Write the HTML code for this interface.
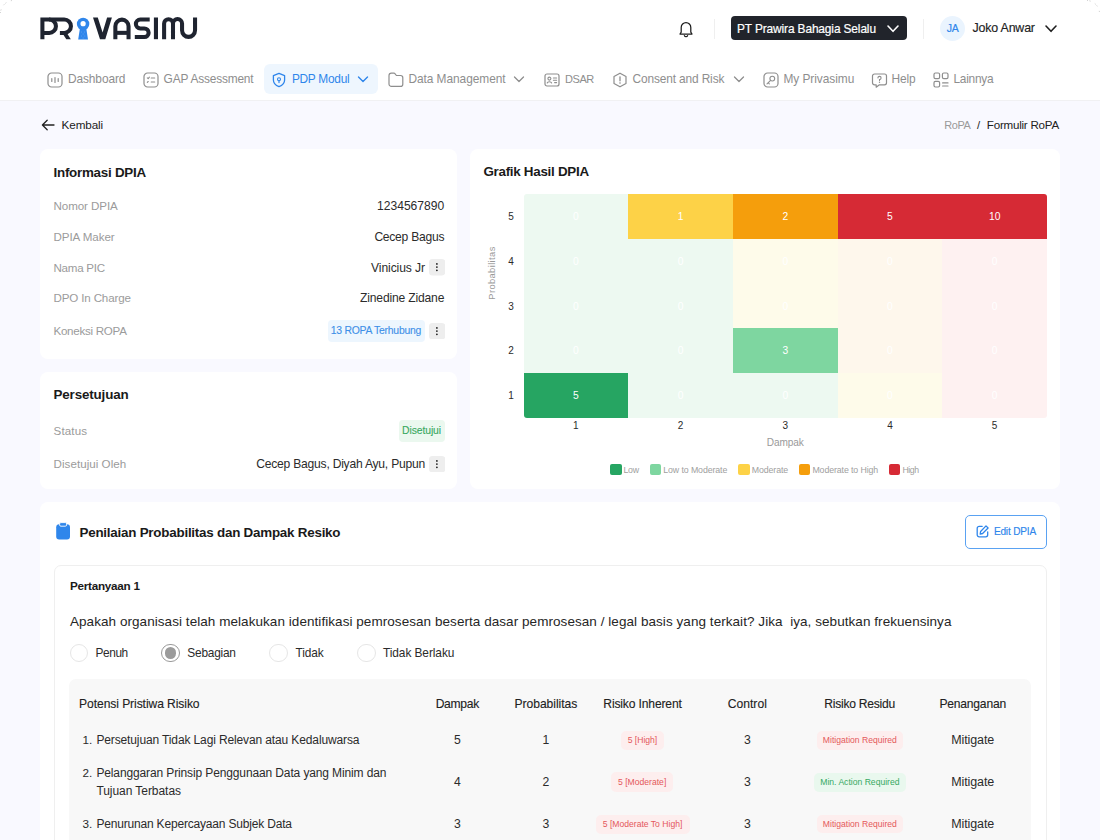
<!DOCTYPE html>
<html><head><meta charset="utf-8"><style>
html,body{margin:0;padding:0;}
body{width:1100px;height:840px;overflow:hidden;position:relative;background:#F9F9FF;font-family:"Liberation Sans", sans-serif;}
.t{position:absolute;white-space:nowrap;}
.r{position:absolute;}
</style></head><body>
<div class="r" style="left:0px;top:0px;width:1100px;height:100px;background:#FFFFFF;border-radius:0;"></div><div class="r" style="left:0px;top:100px;width:1100px;height:1px;background:#F1F1F3;border-radius:0;"></div><svg class="r" style="left:0;top:0" width="1100" height="30"><path d="M0.4 13 A13.5 13.5 0 0 1 13 0.4" stroke="#BDBDBD" stroke-width="0.9" stroke-dasharray="1 1.6 1 5" fill="none"/><path d="M1087 0.4 A13.5 13.5 0 0 1 1099.6 13" stroke="#BDBDBD" stroke-width="0.9" stroke-dasharray="1 1.6 1 5" fill="none"/></svg><svg class="r" style="left:0;top:0" width="210" height="50">
<g stroke="#1F2430" stroke-width="4.05" fill="none" stroke-linecap="butt" stroke-linejoin="miter">
<path d="M42.4 39.2 V19.5 H49.25 A6.7 6.7 0 0 1 49.25 32.9 H42.4"/>
<path d="M49 19.5 H64.25 A6.7 6.7 0 0 1 64.25 32.9 H59.9"/>
<path d="M115.35 39.2 V26.25 A6.6 6.6 0 0 1 128.55 26.25 V39.2"/>
<path d="M115.35 32.85 H128.55"/>
<path d="M149.7 19.55 H140.3 A4.45 4.45 0 0 0 140.3 28.45 H144.35 A4.3 4.3 0 0 1 144.35 37.05 H134.8"/>
<path d="M164.1 39.2 V23.6 A4.45 4.45 0 0 1 173 23.6 V39.2 M173 23.6 A4.52 4.52 0 0 1 182.05 23.6 V30.35 A6.5 6.5 0 0 0 195.05 30.35 V17.5"/>
</g>
<g fill="#1F2430">
<path d="M62.6 33.6 H67.2 L70.8 39.2 H66.3 Z"/>
<path d="M93 17.6 H97.8 L102.6 32.4 L107.1 17.6 H111.9 L105.3 39.2 H100 Z"/>
<rect x="153.9" y="17.5" width="4.1" height="21.7"/>
</g>
<circle cx="83.1" cy="24" r="6.2" fill="#2F86EB"/>
<circle cx="83.1" cy="23.65" r="2.6" fill="#fff"/>
<path d="M79.9 28.6 H86.3 L88 39.4 H78.2 Z" fill="#2F86EB"/>
<g fill="#7FB4F2"><circle cx="81.5" cy="32" r="0.45"/><circle cx="84.7" cy="32" r="0.45"/><circle cx="83.1" cy="34" r="0.45"/><circle cx="81.3" cy="36" r="0.45"/><circle cx="84.9" cy="36" r="0.45"/><circle cx="83.1" cy="38" r="0.45"/></g>
</svg><svg class="r" style="left:676px;top:19px;" width="20" height="20" viewBox="0 0 20 20" fill="none"><path d="M4 15 L5.2 13.2 V8.4 A4.8 4.8 0 0 1 14.8 8.4 V13.2 L16 15 Z" stroke="#1E1E1E" stroke-width="1.25" stroke-linejoin="round"/><path d="M8.4 16.6 A1.7 1.7 0 0 0 11.6 16.6" stroke="#1E1E1E" stroke-width="1.25" stroke-linecap="round"/></svg><div class="r" style="left:714px;top:18.5px;width:1px;height:20.0px;background:#EFEFEF;border-radius:0;"></div><div class="r" style="left:730.5px;top:16.3px;width:176.79999999999995px;height:23.599999999999998px;background:#21242B;border-radius:4px;"></div><div class="t" style="top:21px;font-size:11.9px;line-height:16px;color:#FFFFFF;letter-spacing:-0.12px;left:737px;-webkit-text-stroke:0.2px #FFFFFF;">PT Prawira Bahagia Selalu</div><svg class="r" style="left:886px;top:22.5px;" width="14" height="10" viewBox="0 0 14 10" fill="none"><path d="M2 3 L7 8.3 L12 3" stroke="#fff" stroke-width="1.6" stroke-linecap="round" stroke-linejoin="round"/></svg><div class="r" style="left:923px;top:18.5px;width:1px;height:20.0px;background:#EFEFEF;border-radius:0;"></div><div class="r" style="left:940px;top:15.8px;width:25.200000000000045px;height:25.2px;background:#EAF4FE;border-radius:50%;"></div><div class="t" style="top:21px;font-size:10.5px;line-height:14px;color:#2F86EB;letter-spacing:-0.3px;left:932.60px;width:40px;text-align:center;-webkit-text-stroke:0.2px #2F86EB;">JA</div><div class="t" style="top:20px;font-size:12.4px;line-height:17px;color:#222222;letter-spacing:-0.174px;left:972.5px;-webkit-text-stroke:0.15px #222222;">Joko Anwar</div><svg class="r" style="left:1044px;top:22.5px;" width="14" height="10" viewBox="0 0 14 10" fill="none"><path d="M2 3 L7 8.3 L12 3" stroke="#1E1E1E" stroke-width="1.6" stroke-linecap="round" stroke-linejoin="round"/></svg><div class="r" style="left:264px;top:64px;width:114px;height:30.299999999999997px;background:#EEF6FE;border-radius:6px;"></div><div class="t" style="top:71px;font-size:11.9px;line-height:16px;color:#8E8E8E;letter-spacing:-0.096px;left:68px;">Dashboard</div><div class="t" style="top:71px;font-size:11.9px;line-height:16px;color:#8E8E8E;letter-spacing:-0.178px;left:163.6px;">GAP Assessment</div><div class="t" style="top:71px;font-size:11.9px;line-height:16px;color:#2F86EB;letter-spacing:-0.267px;left:291.9px;">PDP Modul</div><div class="t" style="top:71px;font-size:11.9px;line-height:16px;color:#8E8E8E;letter-spacing:-0.045px;left:408.4px;">Data Management</div><div class="t" style="top:72px;font-size:11.02px;line-height:15px;color:#8E8E8E;letter-spacing:-0.4px;left:564.9px;">DSAR</div><div class="t" style="top:71px;font-size:11.9px;line-height:16px;color:#8E8E8E;letter-spacing:-0.131px;left:632.5px;">Consent and Risk</div><div class="t" style="top:71px;font-size:11.9px;line-height:16px;color:#8E8E8E;letter-spacing:-0.042px;left:783.4px;">My Privasimu</div><div class="t" style="top:71px;font-size:11.9px;line-height:16px;color:#8E8E8E;letter-spacing:-0.056px;left:891.4px;">Help</div><div class="t" style="top:71px;font-size:11.9px;line-height:16px;color:#8E8E8E;letter-spacing:-0.243px;left:953.4px;">Lainnya</div><svg class="r" style="left:47px;top:72px;" width="16" height="16" viewBox="0 0 16 16" fill="none"><rect x="1" y="1" width="14" height="14" rx="3.6" stroke="#8E8E8E" stroke-width="1.2"/><path d="M4.8 6.6 V9.4 M8 5.6 V10.4 M11.2 6.6 V9.4" stroke="#8E8E8E" stroke-width="1.2" stroke-linecap="round"/></svg><svg class="r" style="left:142.5px;top:72px;" width="16" height="16" viewBox="0 0 16 16" fill="none"><rect x="1" y="1" width="14" height="14" rx="3.6" stroke="#8E8E8E" stroke-width="1.2"/><path d="M4.3 5.8 L5.2 6.6 L6.4 5.2 M8.2 6 H11.7 M4.3 10.4 L5.2 9.5 M8.2 10 H11.7" stroke="#8E8E8E" stroke-width="1.1" stroke-linecap="round" stroke-linejoin="round"/></svg><svg class="r" style="left:270.5px;top:71.5px;" width="16" height="16" viewBox="0 0 16 16" fill="none"><path d="M8 1.3 L13.6 3.6 V8 C13.6 11.3 11 13.6 8 14.7 C5 13.6 2.4 11.3 2.4 8 V3.6 Z" stroke="#2F86EB" stroke-width="1.3" stroke-linejoin="round"/><circle cx="8" cy="7.2" r="1.5" stroke="#2F86EB" stroke-width="1.1"/><path d="M8 8.7 V10.6" stroke="#2F86EB" stroke-width="1.2" stroke-linecap="round"/></svg><svg class="r" style="left:357px;top:74.5px;" width="12" height="9" viewBox="0 0 12 9" fill="none"><path d="M1.5 2 L6 6.5 L10.5 2" stroke="#2F86EB" stroke-width="1.4" stroke-linecap="round" stroke-linejoin="round"/></svg><svg class="r" style="left:386.5px;top:71.5px;" width="17" height="16" viewBox="0 0 17 16" fill="none"><path d="M2 3.6 A2.4 2.4 0 0 1 4.4 1.2 H7 A1.2 1.2 0 0 1 7.9 1.6 L9.4 3.5 H13.6 A2.2 2.2 0 0 1 15.8 5.7 V12.2 A2.2 2.2 0 0 1 13.6 14.4 H4.4 A2.4 2.4 0 0 1 2 12 Z" stroke="#8E8E8E" stroke-width="1.2" stroke-linejoin="round"/></svg><svg class="r" style="left:513px;top:74.5px;" width="12" height="9" viewBox="0 0 12 9" fill="none"><path d="M1.5 2 L6 6.5 L10.5 2" stroke="#8E8E8E" stroke-width="1.3" stroke-linecap="round" stroke-linejoin="round"/></svg><svg class="r" style="left:543.5px;top:72px;" width="16" height="16" viewBox="0 0 16 16" fill="none"><rect x="1" y="2" width="14" height="12" rx="2" stroke="#8E8E8E" stroke-width="1.2"/><circle cx="5.4" cy="6.6" r="1.5" stroke="#8E8E8E" stroke-width="1.1"/><path d="M3.2 11 C3.6 9.4 7.2 9.4 7.6 11" stroke="#8E8E8E" stroke-width="1.1" stroke-linecap="round"/><path d="M9.4 6 H12.6 M9.4 8.3 H12.6 M10.6 10.6 H12.6" stroke="#8E8E8E" stroke-width="1.1" stroke-linecap="round"/></svg><svg class="r" style="left:611.5px;top:71.5px;" width="16" height="16" viewBox="0 0 16 16" fill="none"><path d="M8 1.2 L14 4.6 V11.4 L8 14.8 L2 11.4 V4.6 Z" stroke="#8E8E8E" stroke-width="1.2" stroke-linejoin="round"/><path d="M8 4.8 V8.8" stroke="#8E8E8E" stroke-width="1.3" stroke-linecap="round"/><circle cx="8" cy="11" r="0.8" fill="#8E8E8E"/></svg><svg class="r" style="left:732.5px;top:74.5px;" width="12" height="9" viewBox="0 0 12 9" fill="none"><path d="M1.5 2 L6 6.5 L10.5 2" stroke="#8E8E8E" stroke-width="1.3" stroke-linecap="round" stroke-linejoin="round"/></svg><svg class="r" style="left:762.5px;top:72px;" width="16" height="16" viewBox="0 0 16 16" fill="none"><rect x="1" y="1" width="14" height="14" rx="3.6" stroke="#8E8E8E" stroke-width="1.2"/><circle cx="9.3" cy="6.6" r="2.4" stroke="#8E8E8E" stroke-width="1.1"/><path d="M7.6 8.3 L4 11.9 M5.2 10.7 L6.3 11.8" stroke="#8E8E8E" stroke-width="1.1" stroke-linecap="round"/></svg><svg class="r" style="left:870.5px;top:71.5px;" width="17" height="17" viewBox="0 0 17 17" fill="none"><path d="M3.5 2 H13.5 A2 2 0 0 1 15.5 4 V10.8 A2 2 0 0 1 13.5 12.8 H8.4 L5.2 15.2 V12.8 H3.5 A2 2 0 0 1 1.5 10.8 V4 A2 2 0 0 1 3.5 2 Z" stroke="#8E8E8E" stroke-width="1.2" stroke-linejoin="round"/><path d="M6.9 5.9 A1.6 1.6 0 1 1 8.5 7.6 V8.4" stroke="#8E8E8E" stroke-width="1.1" stroke-linecap="round"/><circle cx="8.5" cy="10.3" r="0.7" fill="#8E8E8E"/></svg><svg class="r" style="left:932.5px;top:71.5px;" width="16" height="16" viewBox="0 0 16 16" fill="none"><rect x="1" y="1" width="5.6" height="5.6" rx="1.4" stroke="#8E8E8E" stroke-width="1.2"/><rect x="9.4" y="1" width="5.6" height="5.6" rx="1.4" stroke="#8E8E8E" stroke-width="1.2"/><rect x="1" y="9.4" width="5.6" height="5.6" rx="1.4" stroke="#8E8E8E" stroke-width="1.2"/><path d="M9.6 10.9 H15 M9.6 14 H15" stroke="#8E8E8E" stroke-width="1.2" stroke-linecap="round"/></svg><svg class="r" style="left:40px;top:118px;" width="16" height="14" viewBox="0 0 16 14" fill="none"><path d="M14 7 H2.6 M7.2 2.2 L2.4 7 L7.2 11.8" stroke="#222" stroke-width="1.3" stroke-linecap="round" stroke-linejoin="round"/></svg><div class="t" style="top:117px;font-size:11.7px;line-height:16px;color:#222222;letter-spacing:-0.106px;left:61.6px;">Kembali</div><div class="t" style="top:118px;font-size:10.95px;line-height:15px;color:#9A9A9A;letter-spacing:-0.4px;left:944.3px;">RoPA</div><div class="t" style="top:118px;font-size:11.2px;line-height:15px;color:#222222;left:977px;">/</div><div class="t" style="top:117px;font-size:11.6px;line-height:16px;color:#222222;letter-spacing:-0.238px;right:41.09999999999991px;">Formulir RoPA</div><div class="r" style="left:40px;top:149px;width:417px;height:209.60000000000002px;background:#FFFFFF;border-radius:8px;"></div><div class="r" style="left:470px;top:149px;width:590px;height:339.6px;background:#FFFFFF;border-radius:8px;"></div><div class="r" style="left:40px;top:372px;width:417px;height:116.60000000000002px;background:#FFFFFF;border-radius:8px;"></div><div class="r" style="left:40px;top:502px;width:1020px;height:398px;background:#FFFFFF;border-radius:8px;"></div><div class="t" style="top:164px;font-size:13.4px;line-height:18px;color:#1A1A1A;font-weight:700;letter-spacing:-0.26px;left:53.5px;">Informasi DPIA</div><div class="t" style="top:198px;font-size:11.6px;line-height:16px;color:#9B9B9B;letter-spacing:-0.086px;left:53.5px;">Nomor DPIA</div><div class="t" style="top:198px;font-size:12.1px;line-height:16px;color:#2B2B2B;letter-spacing:-0.007px;right:655.8px;">1234567890</div><div class="t" style="top:229px;font-size:11.6px;line-height:16px;color:#9B9B9B;letter-spacing:-0.073px;left:53.5px;">DPIA Maker</div><div class="t" style="top:229px;font-size:12.1px;line-height:16px;color:#2B2B2B;letter-spacing:-0.253px;right:655.8px;">Cecep Bagus</div><div class="t" style="top:260px;font-size:11.6px;line-height:16px;color:#9B9B9B;letter-spacing:-0.269px;left:53.5px;">Nama PIC</div><div class="t" style="top:260px;font-size:12.1px;line-height:16px;color:#2B2B2B;letter-spacing:-0.099px;right:675.1px;">Vinicius Jr</div><div class="t" style="top:290px;font-size:11.6px;line-height:16px;color:#9B9B9B;letter-spacing:-0.155px;left:53.5px;">DPO In Charge</div><div class="t" style="top:290px;font-size:12.1px;line-height:16px;color:#2B2B2B;letter-spacing:-0.174px;right:655.8px;">Zinedine Zidane</div><svg class="r" style="left:428.6px;top:259.3px" width="16.4" height="16.4" viewBox="0 0 16.4 16.4"><rect width="16.4" height="16.4" rx="3.5" fill="#EEEEEE"/><circle cx="7.9" cy="4.9" r="0.85" fill="#111"/><circle cx="7.9" cy="8.1" r="0.85" fill="#111"/><circle cx="7.9" cy="11.3" r="0.85" fill="#111"/></svg><div class="t" style="top:323px;font-size:11.6px;line-height:16px;color:#9B9B9B;letter-spacing:-0.279px;left:53.5px;">Koneksi ROPA</div><div class="r" style="left:328px;top:319.8px;width:97.19999999999999px;height:22.399999999999977px;background:#EDF6FE;border-radius:4px;"></div><div class="t" style="top:324px;font-size:10.4px;line-height:14px;color:#3D8FE8;letter-spacing:-0.241px;left:330.8px;-webkit-text-stroke:0.1px #3D8FE8;">13 ROPA Terhubung</div><svg class="r" style="left:428.6px;top:323px" width="16.4" height="16.4" viewBox="0 0 16.4 16.4"><rect width="16.4" height="16.4" rx="3.5" fill="#EEEEEE"/><circle cx="7.9" cy="4.9" r="0.85" fill="#111"/><circle cx="7.9" cy="8.1" r="0.85" fill="#111"/><circle cx="7.9" cy="11.3" r="0.85" fill="#111"/></svg><div class="t" style="top:386px;font-size:13.4px;line-height:18px;color:#1A1A1A;font-weight:700;letter-spacing:-0.146px;left:53.5px;">Persetujuan</div><div class="t" style="top:423px;font-size:11.6px;line-height:16px;color:#9B9B9B;letter-spacing:0.125px;left:53.6px;">Status</div><div class="r" style="left:398.6px;top:420px;width:46.0px;height:22px;background:#EBF8EF;border-radius:4px;"></div><div class="t" style="top:424px;font-size:10.4px;line-height:14px;color:#37A860;letter-spacing:-0.107px;right:659px;-webkit-text-stroke:0.1px #37A860;">Disetujui</div><div class="t" style="top:456px;font-size:11.6px;line-height:16px;color:#9B9B9B;letter-spacing:0.032px;left:53.6px;">Disetujui Oleh</div><div class="t" style="top:456px;font-size:12.1px;line-height:16px;color:#2B2B2B;letter-spacing:-0.224px;right:675px;">Cecep Bagus, Diyah Ayu, Pupun</div><svg class="r" style="left:428.6px;top:455.8px" width="16.4" height="16.4" viewBox="0 0 16.4 16.4"><rect width="16.4" height="16.4" rx="3.5" fill="#EEEEEE"/><circle cx="7.9" cy="4.9" r="0.85" fill="#111"/><circle cx="7.9" cy="8.1" r="0.85" fill="#111"/><circle cx="7.9" cy="11.3" r="0.85" fill="#111"/></svg><div class="t" style="top:163px;font-size:13.4px;line-height:18px;color:#1A1A1A;font-weight:700;letter-spacing:-0.278px;left:483.4px;">Grafik Hasil DPIA</div><div class="r" style="left:523.5px;top:194.2px;width:523.5px;height:223.60000000000002px;border-radius:3px;overflow:hidden"><div class="r" style="left:0.00px;top:0.00px;width:105.00px;height:45.02px;background:#EDF9F1"></div><div class="r" style="left:104.70px;top:0.00px;width:105.00px;height:45.02px;background:#FDD247"></div><div class="r" style="left:209.40px;top:0.00px;width:105.00px;height:45.02px;background:#F59E0C"></div><div class="r" style="left:314.10px;top:0.00px;width:105.00px;height:45.02px;background:#D62A35"></div><div class="r" style="left:418.80px;top:0.00px;width:105.00px;height:45.02px;background:#D62A35"></div><div class="r" style="left:0.00px;top:44.72px;width:105.00px;height:45.02px;background:#EDF9F1"></div><div class="r" style="left:104.70px;top:44.72px;width:105.00px;height:45.02px;background:#EDF9F1"></div><div class="r" style="left:209.40px;top:44.72px;width:105.00px;height:45.02px;background:#FEFBEA"></div><div class="r" style="left:314.10px;top:44.72px;width:105.00px;height:45.02px;background:#FEF7EC"></div><div class="r" style="left:418.80px;top:44.72px;width:105.00px;height:45.02px;background:#FEF1F1"></div><div class="r" style="left:0.00px;top:89.44px;width:105.00px;height:45.02px;background:#EDF9F1"></div><div class="r" style="left:104.70px;top:89.44px;width:105.00px;height:45.02px;background:#EDF9F1"></div><div class="r" style="left:209.40px;top:89.44px;width:105.00px;height:45.02px;background:#FEFBEA"></div><div class="r" style="left:314.10px;top:89.44px;width:105.00px;height:45.02px;background:#FEF7EC"></div><div class="r" style="left:418.80px;top:89.44px;width:105.00px;height:45.02px;background:#FEF1F1"></div><div class="r" style="left:0.00px;top:134.16px;width:105.00px;height:45.02px;background:#EDF9F1"></div><div class="r" style="left:104.70px;top:134.16px;width:105.00px;height:45.02px;background:#EDF9F1"></div><div class="r" style="left:209.40px;top:134.16px;width:105.00px;height:45.02px;background:#7ED6A0"></div><div class="r" style="left:314.10px;top:134.16px;width:105.00px;height:45.02px;background:#FEF7EC"></div><div class="r" style="left:418.80px;top:134.16px;width:105.00px;height:45.02px;background:#FEF1F1"></div><div class="r" style="left:0.00px;top:178.88px;width:105.00px;height:45.02px;background:#26A562"></div><div class="r" style="left:104.70px;top:178.88px;width:105.00px;height:45.02px;background:#EDF9F1"></div><div class="r" style="left:209.40px;top:178.88px;width:105.00px;height:45.02px;background:#EDF9F1"></div><div class="r" style="left:314.10px;top:178.88px;width:105.00px;height:45.02px;background:#FEFBEA"></div><div class="r" style="left:418.80px;top:178.88px;width:105.00px;height:45.02px;background:#FEF1F1"></div></div><div class="t" style="top:210px;font-size:10.3px;line-height:14px;color:#FFFFFF;left:555.85px;width:40px;text-align:center;">0</div><div class="t" style="top:210px;font-size:10.3px;line-height:14px;color:#FFFFFF;left:660.55px;width:40px;text-align:center;">1</div><div class="t" style="top:210px;font-size:10.3px;line-height:14px;color:#FFFFFF;left:765.25px;width:40px;text-align:center;">2</div><div class="t" style="top:210px;font-size:10.3px;line-height:14px;color:#FFFFFF;left:869.95px;width:40px;text-align:center;">5</div><div class="t" style="top:210px;font-size:10.3px;line-height:14px;color:#FFFFFF;left:974.65px;width:40px;text-align:center;">10</div><div class="t" style="top:255px;font-size:10.3px;line-height:14px;color:#FFFFFF;left:555.85px;width:40px;text-align:center;">0</div><div class="t" style="top:255px;font-size:10.3px;line-height:14px;color:#FFFFFF;left:660.55px;width:40px;text-align:center;">0</div><div class="t" style="top:255px;font-size:10.3px;line-height:14px;color:#FFFFFF;left:765.25px;width:40px;text-align:center;">0</div><div class="t" style="top:255px;font-size:10.3px;line-height:14px;color:#FFFFFF;left:869.95px;width:40px;text-align:center;">0</div><div class="t" style="top:255px;font-size:10.3px;line-height:14px;color:#FFFFFF;left:974.65px;width:40px;text-align:center;">0</div><div class="t" style="top:300px;font-size:10.3px;line-height:14px;color:#FFFFFF;left:555.85px;width:40px;text-align:center;">0</div><div class="t" style="top:300px;font-size:10.3px;line-height:14px;color:#FFFFFF;left:660.55px;width:40px;text-align:center;">0</div><div class="t" style="top:300px;font-size:10.3px;line-height:14px;color:#FFFFFF;left:765.25px;width:40px;text-align:center;">0</div><div class="t" style="top:300px;font-size:10.3px;line-height:14px;color:#FFFFFF;left:869.95px;width:40px;text-align:center;">0</div><div class="t" style="top:300px;font-size:10.3px;line-height:14px;color:#FFFFFF;left:974.65px;width:40px;text-align:center;">0</div><div class="t" style="top:344px;font-size:10.3px;line-height:14px;color:#FFFFFF;left:555.85px;width:40px;text-align:center;">0</div><div class="t" style="top:344px;font-size:10.3px;line-height:14px;color:#FFFFFF;left:660.55px;width:40px;text-align:center;">0</div><div class="t" style="top:344px;font-size:10.3px;line-height:14px;color:#FFFFFF;left:765.25px;width:40px;text-align:center;">3</div><div class="t" style="top:344px;font-size:10.3px;line-height:14px;color:#FFFFFF;left:869.95px;width:40px;text-align:center;">0</div><div class="t" style="top:344px;font-size:10.3px;line-height:14px;color:#FFFFFF;left:974.65px;width:40px;text-align:center;">0</div><div class="t" style="top:389px;font-size:10.3px;line-height:14px;color:#FFFFFF;left:555.85px;width:40px;text-align:center;">5</div><div class="t" style="top:389px;font-size:10.3px;line-height:14px;color:#FFFFFF;left:660.55px;width:40px;text-align:center;">0</div><div class="t" style="top:389px;font-size:10.3px;line-height:14px;color:#FFFFFF;left:765.25px;width:40px;text-align:center;">0</div><div class="t" style="top:389px;font-size:10.3px;line-height:14px;color:#FFFFFF;left:869.95px;width:40px;text-align:center;">0</div><div class="t" style="top:389px;font-size:10.3px;line-height:14px;color:#FFFFFF;left:974.65px;width:40px;text-align:center;">0</div><div class="t" style="top:210px;font-size:10px;line-height:13px;color:#2B2B2B;right:586.1px;">5</div><div class="t" style="top:255px;font-size:10px;line-height:13px;color:#2B2B2B;right:586.1px;">4</div><div class="t" style="top:300px;font-size:10px;line-height:13px;color:#2B2B2B;right:586.1px;">3</div><div class="t" style="top:344px;font-size:10px;line-height:13px;color:#2B2B2B;right:586.1px;">2</div><div class="t" style="top:389px;font-size:10px;line-height:13px;color:#2B2B2B;right:586.1px;">1</div><div class="t" style="top:419px;font-size:10px;line-height:13px;color:#2B2B2B;left:555.85px;width:40px;text-align:center;">1</div><div class="t" style="top:419px;font-size:10px;line-height:13px;color:#2B2B2B;left:660.55px;width:40px;text-align:center;">2</div><div class="t" style="top:419px;font-size:10px;line-height:13px;color:#2B2B2B;left:765.25px;width:40px;text-align:center;">3</div><div class="t" style="top:419px;font-size:10px;line-height:13px;color:#2B2B2B;left:869.95px;width:40px;text-align:center;">4</div><div class="t" style="top:419px;font-size:10px;line-height:13px;color:#2B2B2B;left:974.65px;width:40px;text-align:center;">5</div><div class="t" style="top:436px;font-size:10.1px;line-height:14px;color:#9A9A9A;letter-spacing:-0.139px;left:745.20px;width:80px;text-align:center;">Dampak</div><div class="t" style="left:461.8px;top:267.4px;width:60px;height:12px;font-size:9.3px;line-height:12px;letter-spacing:0.4px;color:#9A9A9A;text-align:center;transform:rotate(-90deg);transform-origin:30px 6px;">Probabilitas</div><div class="r" style="left:610px;top:463.7px;width:11.799999999999955px;height:11.800000000000011px;background:#26A562;border-radius:2px;"></div><div class="t" style="top:464px;font-size:8.8px;line-height:12px;color:#A0A0A0;letter-spacing:-0.37px;left:623.6px;">Low</div><div class="r" style="left:649.5px;top:463.7px;width:11.799999999999955px;height:11.800000000000011px;background:#7ED6A0;border-radius:2px;"></div><div class="t" style="top:464px;font-size:8.8px;line-height:12px;color:#A0A0A0;letter-spacing:-0.109px;left:663.3px;">Low to Moderate</div><div class="r" style="left:738.2px;top:463.7px;width:11.799999999999955px;height:11.800000000000011px;background:#FDD247;border-radius:2px;"></div><div class="t" style="top:464px;font-size:8.8px;line-height:12px;color:#A0A0A0;letter-spacing:-0.11px;left:751.8px;">Moderate</div><div class="r" style="left:798.5px;top:463.7px;width:11.799999999999955px;height:11.800000000000011px;background:#F59E0C;border-radius:2px;"></div><div class="t" style="top:464px;font-size:8.8px;line-height:12px;color:#A0A0A0;letter-spacing:-0.112px;left:812.4px;">Moderate to High</div><div class="r" style="left:888.7px;top:463.7px;width:11.799999999999955px;height:11.800000000000011px;background:#D62A35;border-radius:2px;"></div><div class="t" style="top:464px;font-size:8.71px;line-height:12px;color:#A0A0A0;letter-spacing:-0.4px;left:902.4px;">High</div><svg class="r" style="left:54.5px;top:522px;" width="17" height="18" viewBox="0 0 17 18" fill="none"><rect x="1.2" y="2.2" width="13.8" height="15.4" rx="3" fill="#2F86EB"/><rect x="4.6" y="0.6" width="7" height="3.6" rx="1.3" fill="#2F86EB" stroke="#fff" stroke-width="0.9"/></svg><div class="t" style="top:524px;font-size:13.4px;line-height:18px;color:#1A1A1A;font-weight:700;letter-spacing:-0.234px;left:79.5px;">Penilaian Probabilitas dan Dampak Resiko</div><div class="r" style="left:965.3px;top:514.6px;width:81.60000000000014px;height:34.0px;background:#FFFFFF;border-radius:5px;box-sizing:border-box;border:1px solid #5AA2F2;"></div><svg class="r" style="left:974.5px;top:524px;" width="15" height="15" viewBox="0 0 15 15" fill="none"><path d="M7.2 2.3 H4.2 A2 2 0 0 0 2.2 4.3 V10.8 A2 2 0 0 0 4.2 12.8 H10.7 A2 2 0 0 0 12.7 10.8 V7.8" stroke="#2F86EB" stroke-width="1.3" stroke-linecap="round"/><path d="M11 1.9 L13.1 4 L7.6 9.5 L5.2 10 L5.6 7.5 Z" stroke="#2F86EB" stroke-width="1.3" stroke-linejoin="round"/></svg><div class="t" style="top:525px;font-size:10.1px;line-height:14px;color:#2F86EB;letter-spacing:-0.183px;left:993.9px;-webkit-text-stroke:0.15px #2F86EB;">Edit DPIA</div><div class="r" style="left:53.5px;top:565px;width:993.0px;height:335px;background:#FFFFFF;border-radius:7px;box-sizing:border-box;border:1px solid #EFEFEF;"></div><div class="t" style="top:578px;font-size:11.7px;line-height:16px;color:#1A1A1A;font-weight:700;letter-spacing:-0.242px;left:69.9px;">Pertanyaan 1</div><div class="t" style="top:613px;font-size:13.5px;line-height:18px;color:#262626;letter-spacing:0.056px;left:70px;">Apakah organisasi telah melakukan identifikasi pemrosesan beserta dasar pemrosesan / legal basis yang terkait? Jika &nbsp;iya, sebutkan frekuensinya</div><div class="r" style="left:69.5px;top:643.6px;width:18.799999999999997px;height:18.799999999999955px;background:#FFFFFF;border-radius:50%;box-sizing:border-box;border:1px solid #E6E6E6;"></div><div class="t" style="top:645px;font-size:11.87px;line-height:16px;color:#2B2B2B;letter-spacing:-0.4px;left:95.5px;">Penuh</div><div class="r" style="left:161.3px;top:643.6px;width:18.80000000000001px;height:18.799999999999955px;background:#FFFFFF;border-radius:50%;box-sizing:border-box;border:1px solid #9A9A9A;"></div><div class="r" style="left:165.10000000000002px;top:647.4px;width:11.199999999999989px;height:11.200000000000045px;background:#9B9B9B;border-radius:50%;"></div><div class="t" style="top:645px;font-size:11.9px;line-height:16px;color:#2B2B2B;letter-spacing:-0.224px;left:187.3px;">Sebagian</div><div class="r" style="left:269px;top:643.6px;width:18.80000000000001px;height:18.799999999999955px;background:#FFFFFF;border-radius:50%;box-sizing:border-box;border:1px solid #E6E6E6;"></div><div class="t" style="top:645px;font-size:11.9px;line-height:16px;color:#2B2B2B;letter-spacing:-0.16px;left:295.6px;">Tidak</div><div class="r" style="left:357px;top:643.6px;width:18.80000000000001px;height:18.799999999999955px;background:#FFFFFF;border-radius:50%;box-sizing:border-box;border:1px solid #E6E6E6;"></div><div class="t" style="top:645px;font-size:11.9px;line-height:16px;color:#2B2B2B;letter-spacing:-0.072px;left:383px;">Tidak Berlaku</div><div class="r" style="left:69.1px;top:678.8px;width:961.8000000000001px;height:221.20000000000005px;background:#F8F8F8;border-radius:7px;"></div><div class="t" style="top:696px;font-size:12.1px;line-height:16px;color:#222222;letter-spacing:-0.083px;left:79.1px;-webkit-text-stroke:0.12px #222222;">Potensi Pristiwa Risiko</div><div class="t" style="top:696px;font-size:12.1px;line-height:16px;color:#222222;letter-spacing:-0.289px;left:382.30px;width:150px;text-align:center;-webkit-text-stroke:0.12px #222222;">Dampak</div><div class="t" style="top:696px;font-size:12.1px;line-height:16px;color:#222222;letter-spacing:-0.037px;left:470.90px;width:150px;text-align:center;-webkit-text-stroke:0.12px #222222;">Probabilitas</div><div class="t" style="top:696px;font-size:12.1px;line-height:16px;color:#222222;letter-spacing:-0.155px;left:567.50px;width:150px;text-align:center;-webkit-text-stroke:0.12px #222222;">Risiko Inherent</div><div class="t" style="top:696px;font-size:12.1px;line-height:16px;color:#222222;letter-spacing:0.017px;left:672.30px;width:150px;text-align:center;-webkit-text-stroke:0.12px #222222;">Control</div><div class="t" style="top:696px;font-size:12.1px;line-height:16px;color:#222222;letter-spacing:-0.253px;left:784.60px;width:150px;text-align:center;-webkit-text-stroke:0.12px #222222;">Risiko Residu</div><div class="t" style="top:696px;font-size:12.1px;line-height:16px;color:#222222;letter-spacing:-0.212px;left:897.70px;width:150px;text-align:center;-webkit-text-stroke:0.12px #222222;">Penanganan</div><div class="t" style="top:732px;font-size:11.7px;line-height:16px;color:#2B2B2B;left:82.6px;">1.</div><div class="t" style="top:732px;font-size:12px;line-height:16px;color:#2B2B2B;letter-spacing:-0.125px;left:96.4px;">Persetujuan Tidak Lagi Relevan atau Kedaluwarsa</div><div class="t" style="top:765px;font-size:11.7px;line-height:16px;color:#2B2B2B;left:82.6px;">2.</div><div class="t" style="top:765px;font-size:12px;line-height:16px;color:#2B2B2B;letter-spacing:-0.125px;left:96.4px;">Pelanggaran Prinsip Penggunaan Data yang Minim dan</div><div class="t" style="top:783px;font-size:12px;line-height:16px;color:#2B2B2B;letter-spacing:-0.056px;left:96.4px;">Tujuan Terbatas</div><div class="t" style="top:816px;font-size:11.7px;line-height:16px;color:#2B2B2B;left:82.6px;">3.</div><div class="t" style="top:816px;font-size:12px;line-height:16px;color:#2B2B2B;letter-spacing:-0.184px;left:96.4px;">Penurunan Kepercayaan Subjek Data</div><div class="t" style="top:732px;font-size:12.2px;line-height:16px;color:#2B2B2B;left:437.30px;width:40px;text-align:center;">5</div><div class="t" style="top:732px;font-size:12.2px;line-height:16px;color:#2B2B2B;left:525.90px;width:40px;text-align:center;">1</div><div class="t" style="top:732px;font-size:12.2px;line-height:16px;color:#2B2B2B;left:727.30px;width:40px;text-align:center;">3</div><div class="t" style="top:732px;font-size:12.5px;line-height:17px;color:#2B2B2B;letter-spacing:-0.126px;left:922.70px;width:100px;text-align:center;">Mitigate</div><div class="t" style="top:774px;font-size:12.2px;line-height:16px;color:#2B2B2B;left:437.30px;width:40px;text-align:center;">4</div><div class="t" style="top:774px;font-size:12.2px;line-height:16px;color:#2B2B2B;left:525.90px;width:40px;text-align:center;">2</div><div class="t" style="top:774px;font-size:12.2px;line-height:16px;color:#2B2B2B;left:727.30px;width:40px;text-align:center;">3</div><div class="t" style="top:774px;font-size:12.5px;line-height:17px;color:#2B2B2B;letter-spacing:-0.126px;left:922.70px;width:100px;text-align:center;">Mitigate</div><div class="t" style="top:816px;font-size:12.2px;line-height:16px;color:#2B2B2B;left:437.30px;width:40px;text-align:center;">3</div><div class="t" style="top:816px;font-size:12.2px;line-height:16px;color:#2B2B2B;left:525.90px;width:40px;text-align:center;">3</div><div class="t" style="top:816px;font-size:12.2px;line-height:16px;color:#2B2B2B;left:727.30px;width:40px;text-align:center;">3</div><div class="t" style="top:816px;font-size:12.5px;line-height:17px;color:#2B2B2B;letter-spacing:-0.126px;left:922.70px;width:100px;text-align:center;">Mitigate</div><div class="r" style="left:620.9px;top:730.8px;width:43.10000000000002px;height:19.100000000000023px;background:#FDEEEE;border-radius:5px;"></div><div class="t" style="top:734px;font-size:8.6px;line-height:12px;color:#E4585B;left:542.45px;width:200px;text-align:center;">5 [High]</div><div class="r" style="left:610.8px;top:772.4px;width:62.700000000000045px;height:19.5px;background:#FDEEEE;border-radius:5px;"></div><div class="t" style="top:776px;font-size:8.6px;line-height:12px;color:#E4585B;left:542.15px;width:200px;text-align:center;">5 [Moderate]</div><div class="r" style="left:595.5px;top:814.5px;width:94.10000000000002px;height:19.100000000000023px;background:#FDEEEE;border-radius:5px;"></div><div class="t" style="top:818px;font-size:8.6px;line-height:12px;color:#E4585B;left:542.55px;width:200px;text-align:center;">5 [Moderate To High]</div><div class="r" style="left:816.8px;top:731px;width:86.20000000000005px;height:18.600000000000023px;background:#FDEEEE;border-radius:5px;"></div><div class="t" style="top:734px;font-size:8.6px;line-height:12px;color:#E4585B;left:759.90px;width:200px;text-align:center;">Mitigation Required</div><div class="r" style="left:813.9px;top:772.5px;width:92.0px;height:19.100000000000023px;background:#E9F8EE;border-radius:5px;"></div><div class="t" style="top:776px;font-size:8.6px;line-height:12px;color:#36A862;left:759.90px;width:200px;text-align:center;">Min. Action Required</div><div class="r" style="left:816.8px;top:814.6px;width:86.20000000000005px;height:18.799999999999955px;background:#FDEEEE;border-radius:5px;"></div><div class="t" style="top:818px;font-size:8.6px;line-height:12px;color:#E4585B;left:759.90px;width:200px;text-align:center;">Mitigation Required</div>
</body></html>
